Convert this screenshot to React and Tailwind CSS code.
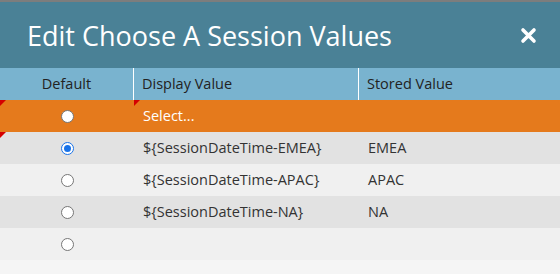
import React from "react";

const font = { fontFamily: '"Open Sans", "Noto Sans", sans-serif' };

function Radio({ checked }) {
  if (checked) {
    return (
      <span className="flex h-[13px] w-[13px] items-center justify-center rounded-full border border-[#1a73e8] bg-white">
        <span className="h-[7px] w-[7px] rounded-full bg-[#1a73e8]" />
      </span>
    );
  }
  return <span className="block h-[13px] w-[13px] rounded-full border border-[#767676] bg-white" />;
}

function Tri() {
  return (
    <span
      className="absolute left-0 top-0 h-0 w-0 border-r-[6px] border-t-[6px] border-r-transparent border-t-[#d50000]"
    />
  );
}

const rows = [
  { d: "Select...", s: "", bg: "bg-[#e57a1c]", text: "text-white", tri: true, tri2: true, checked: false },
  { d: "${SessionDateTime-EMEA}", s: "EMEA", bg: "bg-[#e2e2e2]", text: "text-[#333]", tri: true, checked: true },
  { d: "${SessionDateTime-APAC}", s: "APAC", bg: "bg-[#f0f0f0]", text: "text-[#333]", checked: false },
  { d: "${SessionDateTime-NA}", s: "NA", bg: "bg-[#e2e2e2]", text: "text-[#333]", checked: false },
  { d: "", s: "", bg: "bg-[#f0f0f0]", text: "text-[#333]", checked: false },
];

export default function App() {
  return (
    <div className="h-[274px] w-[560px] overflow-hidden bg-[#f5f5f5]" style={font}>
      <div className="h-[2px] bg-[#7d7d7d]" />
      <div className="flex h-[66px] items-center justify-between bg-[#4a8196] pl-[27px] pr-[23px]">
        <span className="text-[27px] leading-none text-white">Edit Choose A Session Values</span>
        <svg width="17" height="17" viewBox="0 0 17 17">
          <path d="M3 3 L14 14 M14 3 L3 14" stroke="white" strokeWidth="3.6" strokeLinecap="round" />
        </svg>
      </div>
      <div className="flex h-[32px] bg-[#79b3cf] text-[14.5px] text-[#222]">
        <div className="flex w-[134px] items-center justify-center border-r border-white">Default</div>
        <div className="flex w-[225px] items-center border-r border-white pl-[8px]">Display Value</div>
        <div className="flex flex-1 items-center pl-[8px]">Stored Value</div>
      </div>
      {rows.map((r, i) => (
        <div key={i} className={`flex h-[32px] text-[14.5px] ${r.bg} ${r.text}`}>
          <div className="relative flex w-[134px] items-center justify-center">
            {r.tri && <Tri />}
            <Radio checked={r.checked} />
          </div>
          <div className="relative flex w-[225px] items-center pl-[9px]">
            {r.tri2 && <Tri />}
            {r.d}
          </div>
          <div className="flex flex-1 items-center pl-[9px]">{r.s}</div>
        </div>
      ))}
    </div>
  );
}
